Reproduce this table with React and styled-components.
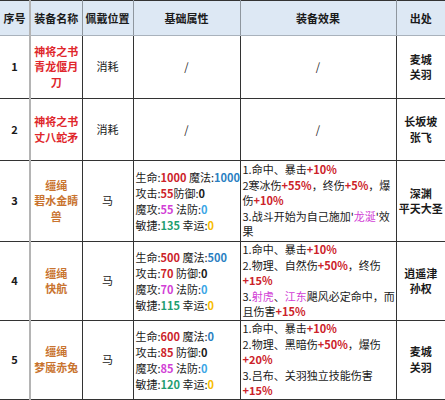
import React from 'react';
import styled, { createGlobalStyle } from 'styled-components';

const Global = createGlobalStyle`
  html, body { margin: 0; padding: 0; background: #ffffff; }
  body { font-family: "Noto Sans CJK SC", "Noto Sans", sans-serif; font-size: 11px; color: #222; }
`;

const cols = [30, 52, 51, 107, 156, 49];

const rows = [
  {
    no: 1, name: ['神将之书', '青龙偃月', '刀'], tone: 'red', slot: '消耗', stats: null, effects: null,
    from: ['麦城', '关羽'], h: 63,
  },
  {
    no: 2, name: ['神将之书', '丈八蛇矛'], tone: 'red', slot: '消耗', stats: null, effects: null,
    from: ['长坂坡', '张飞'], h: 62,
  },
  {
    no: 3, name: ['缰绳', '碧水金睛', '兽'], tone: 'orange', slot: '马',
    stats: [
      [['生命:'], ['1000', 'red'], [' 魔法:'], ['1000', 'blue']],
      [['攻击:'], ['55', 'red'], ['防御:'], ['0', 'black']],
      [['魔攻:'], ['55', 'pink'], [' 法防:'], ['0', 'sky']],
      [['敏捷:'], ['135', 'green'], [' 幸运:'], ['0', 'gold']],
    ],
    effects: [
      [['1.命中、暴击'], ['+10%', 'red']],
      [['2寒冰伤'], ['+55%', 'red'], ['，终伤'], ['+5%', 'red'], ['，爆']],
      [['伤'], ['+10%', 'red']],
      [["3.战斗开始为自己施加'"], ['龙涎', 'pinkThin'], ["'效"]],
      [['果']],
    ],
    from: ['深渊', '平天大圣'], h: 81,
  },
  {
    no: 4, name: ['缰绳', '快航'], tone: 'orange', slot: '马',
    stats: [
      [['生命:'], ['500', 'red'], [' 魔法:'], ['500', 'blue']],
      [['攻击:'], ['70', 'red'], [' 防御:'], ['0', 'black']],
      [['魔攻:'], ['70', 'pink'], [' 法防:'], ['0', 'sky']],
      [['敏捷:'], ['115', 'green'], [' 幸运:'], ['0', 'gold']],
    ],
    effects: [
      [['1.命中、暴击'], ['+10%', 'red']],
      [['2.物理、自然伤'], ['+50%', 'red'], ['，终伤']],
      [['+15%', 'red']],
      [['3.'], ['射虎', 'pinkThin'], ['、'], ['江东', 'pinkThin'], ['飓风必定命中，而']],
      [['且伤害'], ['+15%', 'red']],
    ],
    from: ['逍遥津', '孙权'], h: 79,
  },
  {
    no: 5, name: ['缰绳', '梦魇赤兔'], tone: 'orange', slot: '马',
    stats: [
      [['生命:'], ['600', 'red'], [' 魔法:'], ['0', 'blue']],
      [['攻击:'], ['85', 'red'], [' 防御:'], ['0', 'black']],
      [['魔攻:'], ['85', 'pink'], [' 法防:'], ['0', 'sky']],
      [['敏捷:'], ['120', 'green'], [' 幸运:'], ['0', 'gold']],
    ],
    effects: [
      [['1.命中、暴击'], ['+10%', 'red']],
      [['2.物理、黑暗伤'], ['+50%', 'red'], ['，爆伤']],
      [['+20%', 'red']],
      [['3.吕布、关羽独立技能伤害']],
      [['+15%', 'red']],
    ],
    from: ['麦城', '关羽'], h: 78,
  },
];

const palette = {
  red: '#cc2229',
  blue: '#2b7fc2',
  black: '#1a1a1a',
  pink: '#d23fd6',
  pinkThin: '#d23fd6',
  sky: '#3aa6e6',
  green: '#1f9e70',
  gold: '#f7bd00',
};

const Table = styled.table`
  width: 445px;
  border-collapse: collapse;
  table-layout: fixed;
  border-top: 1px solid #333;
`;

const Head = styled.th`
  height: 34px;
  padding: 0;
  background: #dde8f4;
  font-weight: 700;
  font-size: 11px;
  color: #1a1a1a;
  text-align: center;
  border-bottom: 1px solid #a9b2bc;
  border-right: ${p => (p.$wide ? '2px solid #b4b4b4' : p.$last ? 'none' : '1px solid #8e969e')};
`;

const Cell = styled.td`
  padding: 0 2px;
  vertical-align: middle;
  text-align: ${p => (p.$left ? 'left' : 'center')};
  font-weight: ${p => (p.$bold ? 700 : 400)};
  line-height: 15.5px;
  color: #1a1a1a;
  border-bottom: 1px solid #333;
  border-right: ${p => (p.$wide ? '2px solid #b4b4b4' : p.$last ? 'none' : '1px solid #333')};
  white-space: ${p => (p.$left ? 'nowrap' : 'normal')};
  overflow: visible;
`;

const Name = styled.div`
  font-weight: 700;
  color: ${p => (p.$tone === 'red' ? '#e0262b' : '#c9742f')};
`;

const Line = styled.div`
  white-space: nowrap;
  line-height: ${p => (p.$tight ? '15.6px' : '16px')};
`;

const Val = styled.span`
  color: ${p => palette[p.$c] || 'inherit'};
  font-weight: ${p => (p.$c && p.$c !== 'pinkThin' ? 700 : 400)};
`;

function Lines({ items, tight }) {
  return items.map((line, i) => (
    <Line key={i} $tight={tight}>
      {line.map(([t, c], j) => (
        <Val key={j} $c={c}>{t}</Val>
      ))}
    </Line>
  ));
}

export default function App() {
  const heads = ['序号', '装备名称', '佩戴位置', '基础属性', '装备效果', '出处'];
  return (
    <>
      <Global />
      <Table>
        <colgroup>
          {cols.map((w, i) => <col key={i} style={{ width: w }} />)}
        </colgroup>
        <thead>
          <tr>
            {heads.map((h, i) => (
              <Head key={h} $wide={i === 0} $last={i === heads.length - 1}>{h}</Head>
            ))}
          </tr>
        </thead>
        <tbody>
          {rows.map(r => (
            <tr key={r.no} style={{ height: r.h }}>
              <Cell $bold $wide>{r.no}</Cell>
              <Cell>
                {r.name.map(n => <Name key={n} $tone={r.tone}>{n}</Name>)}
              </Cell>
              <Cell>{r.slot}</Cell>
              <Cell $left={!!r.stats}>{r.stats ? <Lines items={r.stats} /> : '/'}</Cell>
              <Cell $left={!!r.effects}>{r.effects ? <Lines items={r.effects} tight /> : '/'}</Cell>
              <Cell $bold $last>
                {r.from.map(f => <div key={f}>{f}</div>)}
              </Cell>
            </tr>
          ))}
        </tbody>
      </Table>
    </>
  );
}
